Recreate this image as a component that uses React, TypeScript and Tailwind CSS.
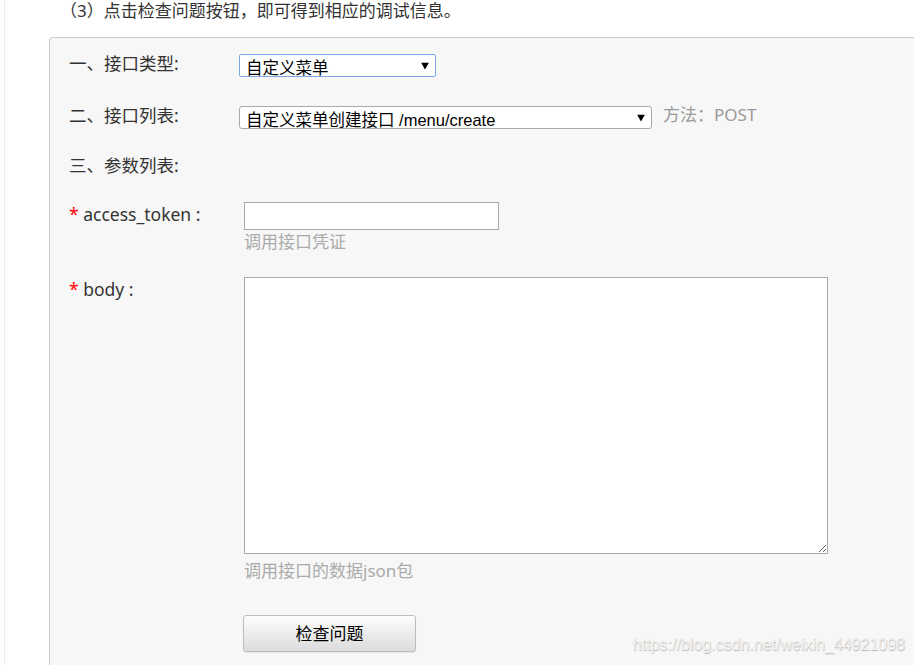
import React from "react";

const cjk = "font-['Microsoft_YaHei','Noto_Sans','Noto_Sans_CJK_SC',sans-serif]";

function Arrow() {
  return (
    <svg
      className="pointer-events-none absolute right-[7px] top-1/2 -translate-y-1/2"
      width="8"
      height="7"
      viewBox="0 0 8 7"
    >
      <path d="M0 0 H8 L4 7 Z" fill="#000" />
    </svg>
  );
}

function FakeSelect({
  value,
  width,
  focused,
}: {
  value: string;
  width: string;
  focused?: boolean;
}) {
  return (
    <div className={`relative h-[23px] ${width}`}>
      <select
        defaultValue={value}
        className={`h-full w-full appearance-none overflow-hidden bg-white pl-[6px] pr-5 pt-[3px] text-[16.5px] leading-[20px] text-black outline-none font-['Microsoft_YaHei','Liberation_Sans','Noto_Sans_CJK_SC',sans-serif] ${
          focused
            ? "rounded-[2px] border border-[#7ba7e6]"
            : "rounded-[3px] border border-[#a9a9a9]"
        }`}
      >
        <option>{value}</option>
      </select>
      <Arrow />
    </div>
  );
}

export default function App() {
  return (
    <div className={`relative h-[665px] overflow-hidden bg-white pl-[4px] ${cjk}`}>
      <div className="flex h-full flex-col border-l border-[#ececec] pl-[44px]">
        {/* heading */}
        <div className="h-[37px] shrink-0 pl-[11px]">
          <p className="text-[17px] leading-[22px] text-[#333]">
            （3）点击检查问题按钮，即可得到相应的调试信息。
          </p>
        </div>

        {/* panel */}
        <div className="flex-1 rounded-tl-[4px] border-l border-t border-[#cbcbcb] bg-[#f7f7f7] pl-[19px] pt-[16px] text-[17.5px] text-[#333]">
          <div className="flex h-[23px] items-center">
            <span className="-mt-[4px] w-[170px] leading-[23px]">一、接口类型:</span>
            <FakeSelect value="自定义菜单" width="w-[197px]" focused />
          </div>

          <div className="mt-[29px] flex h-[23px] items-center">
            <span className="-mt-[5px] w-[170px] leading-[23px]">二、接口列表:</span>
            <FakeSelect value="自定义菜单创建接口 /menu/create" width="w-[413px]" />
            <span className="-mt-[5px] ml-[11px] text-[17px] text-[#999]">方法：POST</span>
          </div>

          <div className="mt-[27px] flex h-[23px] items-center">
            <span className="-mt-[4px] leading-[23px]">三、参数列表:</span>
          </div>

          <div className="mt-[23px] flex items-start">
            <span className="w-[175px] leading-[24px]">
              <span className="text-[#f00]">*</span> access_token :
            </span>
            <div className="flex flex-col">
              <input className="h-[28px] w-[255px] border border-[#a9a9a9] bg-white px-1 outline-none" />
              <span className="mt-[1px] text-[17px] leading-[22px] text-[#aaa]">调用接口凭证</span>
            </div>
          </div>

          <div className="mt-[24px] flex items-start">
            <span className="w-[175px] leading-[24px]">
              <span className="text-[#f00]">*</span> body :
            </span>
            <div className="flex flex-col">
              <textarea className="block h-[277px] w-[584px] border border-[#a9a9a9] bg-white outline-none" />
              <span className="mt-[6px] text-[17px] leading-[22px] text-[#aaa]">调用接口的数据json包</span>
            </div>
          </div>

          <div className="mt-[33px] pl-[174px]">
            <button className="h-[37px] w-[173px] rounded-[3px] border border-[#bdbdbd] bg-gradient-to-b from-[#fdfdfd] to-[#dcdcdc] text-[17px] text-black shadow-[0_1px_1px_rgba(0,0,0,0.08)]">
              检查问题
            </button>
          </div>
        </div>
      </div>

      {/* watermark */}
      <span className="pointer-events-none absolute bottom-[8px] right-[9px] text-[16px] text-[#f2f2f2] font-['Liberation_Sans',sans-serif] [text-shadow:0.5px_0.5px_1px_#b4b4b4]">
        https://blog.csdn.net/weixin_44921098
      </span>
    </div>
  );
}
